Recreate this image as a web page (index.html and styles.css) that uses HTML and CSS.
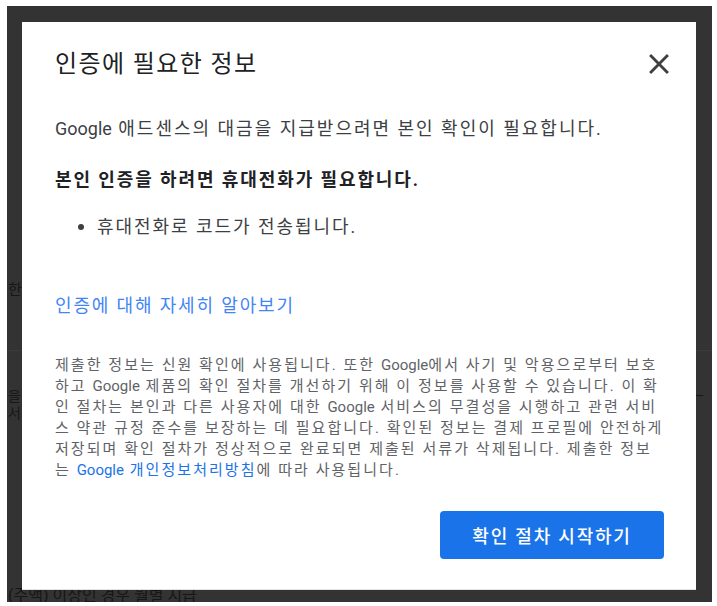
FILE: index.html
```html
<!DOCTYPE html>
<html lang="ko">
<head>
<meta charset="utf-8">
<title>인증에 필요한 정보</title>
<link rel="stylesheet" href="styles.css">
</head>
<body>
<div class="screen">
  <div class="page">
    <div class="page-row">한</div>
    <div class="page-rule"></div>
    <div class="page-block">
      <div class="page-row tight"><span>을</span><span class="page-right">ㅡ</span></div>
      <div class="page-row tight">서</div>
    </div>
    <div class="page-bottom">(주액) 이상인 경우 월별 지급</div>
  </div>

  <div class="dialog" role="dialog">
    <div class="dialog-head">
      <h1 class="title">인증에 필요한 정보</h1>
      <button class="close" aria-label="닫기">
        <svg width="34" height="34" viewBox="0 0 24 24"><path d="M19 6.41L17.59 5 12 10.59 6.41 5 5 6.41 10.59 12 5 17.59 6.41 19 12 13.41 17.59 19 19 17.59 13.41 12z" fill="#3c4043"/></svg>
      </button>
    </div>
    <p class="lead"><span class="lat">Google</span> 애드센스의 대금을 지급받으려면 본인 확인이 필요합니다.</p>
    <p class="strong">본인 인증을 하려면 휴대전화가 필요합니다.</p>
    <ul class="bullets">
      <li>휴대전화로 코드가 전송됩니다.</li>
    </ul>
    <a class="learn" href="#">인증에 대해 자세히 알아보기</a>
    <p class="fine">제출한 정보는 신원 확인에 사용됩니다. 또한 <span class="lat">Google</span>에서 사기 및 악용으로부터 보호<br>하고 <span class="lat">Google</span> 제품의 확인 절차를 개선하기 위해 이 정보를 사용할 수 있습니다. 이 확<br>인 절차는 본인과 다른 사용자에 대한 <span class="lat">Google</span> 서비스의 무결성을 시행하고 관련 서비<br>스 약관 규정 준수를 보장하는 데 필요합니다. 확인된 정보는 결제 프로필에 안전하게<br>저장되며 확인 절차가 정상적으로 완료되면 제출된 서류가 삭제됩니다. 제출한 정보<br>는 <a href="#"><span class="lat">Google</span> 개인정보처리방침</a>에 따라 사용됩니다.</p>
    <div class="actions">
      <button class="primary">확인 절차 시작하기</button>
    </div>
  </div>
</div>
</body>
</html>
```
FILE: styles.css
```css
* { box-sizing: border-box; }
html, body { margin: 0; padding: 0; background: #ffffff; }
body {
  font-family: Roboto, "Noto Sans CJK KR", sans-serif;
  width: 717px;
  height: 606px;
  overflow: hidden;
}
.screen {
  position: relative;
  margin: 6px 0 0 7px;
  width: 705px;
  height: 596px;
  background: #333333;
  overflow: hidden;
}
.page {
  padding: 274px 0 0 1px;
  color: #161616;
  font-size: 15px;
}
.page-row {
  line-height: 20px;
  white-space: nowrap;
}
.page-row.tight {
  font-size: 14px;
  line-height: 17px;
  display: flex;
  justify-content: space-between;
}
.page-right { margin-right: 8px; }
.page-rule {
  margin-top: 50px;
  height: 1px;
  background: #3b3b3b;
}
.page-block { margin-top: 37px; }
.page-bottom {
  margin-top: 164px;
  font-size: 16px;
  line-height: 20px;
  white-space: nowrap;
}

.dialog {
  position: absolute;
  left: 15px;
  top: 16px;
  width: 674px;
  height: 568px;
  background: #ffffff;
  padding: 25px 32px 0 33px;
  display: flex;
  flex-direction: column;
  align-items: flex-start;
  border-bottom: 1px solid #e3e3e3;
  letter-spacing: 1.95px;
}
.lat { letter-spacing: 0; }
.dialog-head {
  align-self: stretch;
  display: flex;
  justify-content: space-between;
  align-items: center;
}
.title {
  margin: 0;
  font-size: 24px;
  line-height: 32px;
  font-weight: 400;
  color: #202124;
  letter-spacing: 1.4px;
}
.close {
  border: 0;
  padding: 0;
  margin: 0 -12px 0 0;
  background: none;
  width: 34px;
  height: 34px;
  display: flex;
}
.lead, .strong {
  margin: 34px 0 0;
  font-size: 18px;
  line-height: 28px;
  color: #3c4043;
}
.lead { letter-spacing: 2px; }
.strong {
  margin-top: 23px;
  font-weight: 700;
  color: #202124;
  letter-spacing: 1.9px;
}
.bullets {
  list-style: none;
  margin: 19px 0 0;
  padding: 0 0 0 23px;
}
.bullets li {
  display: flex;
  align-items: center;
  font-size: 18px;
  line-height: 28px;
  color: #3c4043;
}
.bullets li::before {
  content: "";
  width: 6px;
  height: 6px;
  border-radius: 50%;
  background: #3c4043;
  margin-right: 13px;
}
.learn {
  margin-top: 51px;
  font-size: 18px;
  line-height: 28px;
  color: #4285f4;
  text-decoration: none;
  letter-spacing: 1.85px;
}
.fine {
  margin: 35px 0 0;
  font-size: 15px;
  line-height: 21px;
  color: #5f6368;
  white-space: nowrap;
  letter-spacing: 2.05px;
}
.fine a {
  color: #1a73e8;
  text-decoration: none;
}
.actions {
  align-self: stretch;
  display: flex;
  justify-content: flex-end;
  margin-top: 30px;
}
.primary {
  width: 224px;
  height: 48px;
  border: 0;
  border-radius: 4px;
  background: #1a73e8;
  color: #ffffff;
  font-family: Roboto, "Noto Sans CJK KR", sans-serif;
  font-size: 18px;
  font-weight: 500;
  letter-spacing: 1.8px;
}
```
